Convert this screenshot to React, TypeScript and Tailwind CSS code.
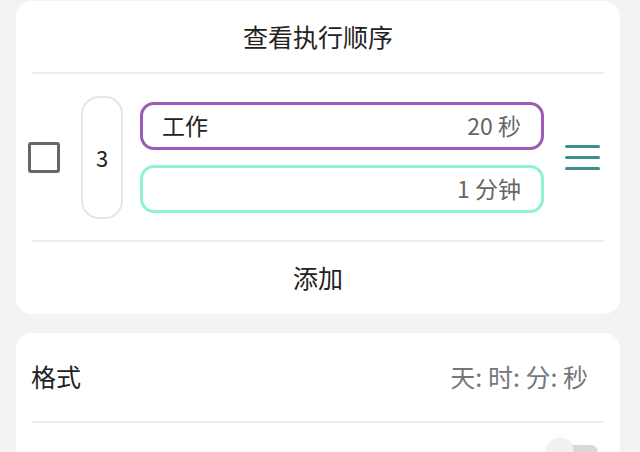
import React from 'react';

const font = { fontFamily: '"Noto Sans CJK SC", "Noto Sans", sans-serif' };

function Menu() {
  return (
    <div className="flex w-[35px] flex-col gap-[8px]">
      <div className="h-[3px] rounded-full bg-[#3d8f8c]" />
      <div className="h-[3px] rounded-full bg-[#3d8f8c]" />
      <div className="h-[3px] rounded-full bg-[#3d8f8c]" />
    </div>
  );
}

export default function App() {
  return (
    <div className="h-[452px] w-[640px] overflow-hidden bg-[#f3f3f3]" style={font}>
      <div className="ml-4 mt-px w-[604px] rounded-[16px] bg-white">
        <div className="flex h-[71px] items-center justify-center pt-px text-[25px] text-[#222]">查看执行顺序</div>
        <div className="mx-4 h-[2px] bg-[#ececec]" />
        <div className="flex h-[166px] items-center pl-3">
          <div className="h-[31px] w-[32px] rounded-[3px] border-[3px] border-[#666]" />
          <div className="ml-[21px] flex h-[123px] w-[42px] items-center justify-center rounded-[18px] border-2 border-[#e6e6e6] text-[22px] text-[#222]">
            3
          </div>
          <div className="ml-[17px] flex w-[404px] flex-col gap-[15px]">
            <div className="flex h-[48px] items-center justify-between rounded-[14px] border-[3px] border-[#9d5bb8] pl-[19px] pr-[20px] text-[23px]">
              <span className="text-[#222]">工作</span>
              <span className="text-[#666]">20 秒</span>
            </div>
            <div className="flex h-[48px] items-center justify-end rounded-[14px] border-[3px] border-[#8ff2d8] pr-[20px] text-[23px] text-[#666]">
              1 分钟
            </div>
          </div>
          <div className="ml-[21px]">
            <Menu />
          </div>
        </div>
        <div className="mx-4 h-[2px] bg-[#ececec]" />
        <div className="flex h-[72px] items-center justify-center text-[25px] text-[#222]">添加</div>
      </div>
      <div className="ml-4 mt-[19px] w-[604px] rounded-[16px] bg-white">
        <div className="flex h-[88px] items-center justify-between pl-[15px] pr-[32px]">
          <span className="text-[25px] text-[#222]">格式</span>
          <span className="text-[25px] text-[#777]">天: 时: 分: 秒</span>
        </div>
        <div className="mx-4 h-[2px] bg-[#ececec]" />
        <div className="flex h-[60px] items-start justify-end pr-[22px] pt-[22px]">
          <div className="relative h-[14px] w-[46px] rounded-full bg-[#d9d9d9]">
            <div className="absolute -top-[7px] left-[-6px] h-[28px] w-[28px] rounded-full bg-[#f1f1f1] shadow" />
          </div>
        </div>
      </div>
    </div>
  );
}
